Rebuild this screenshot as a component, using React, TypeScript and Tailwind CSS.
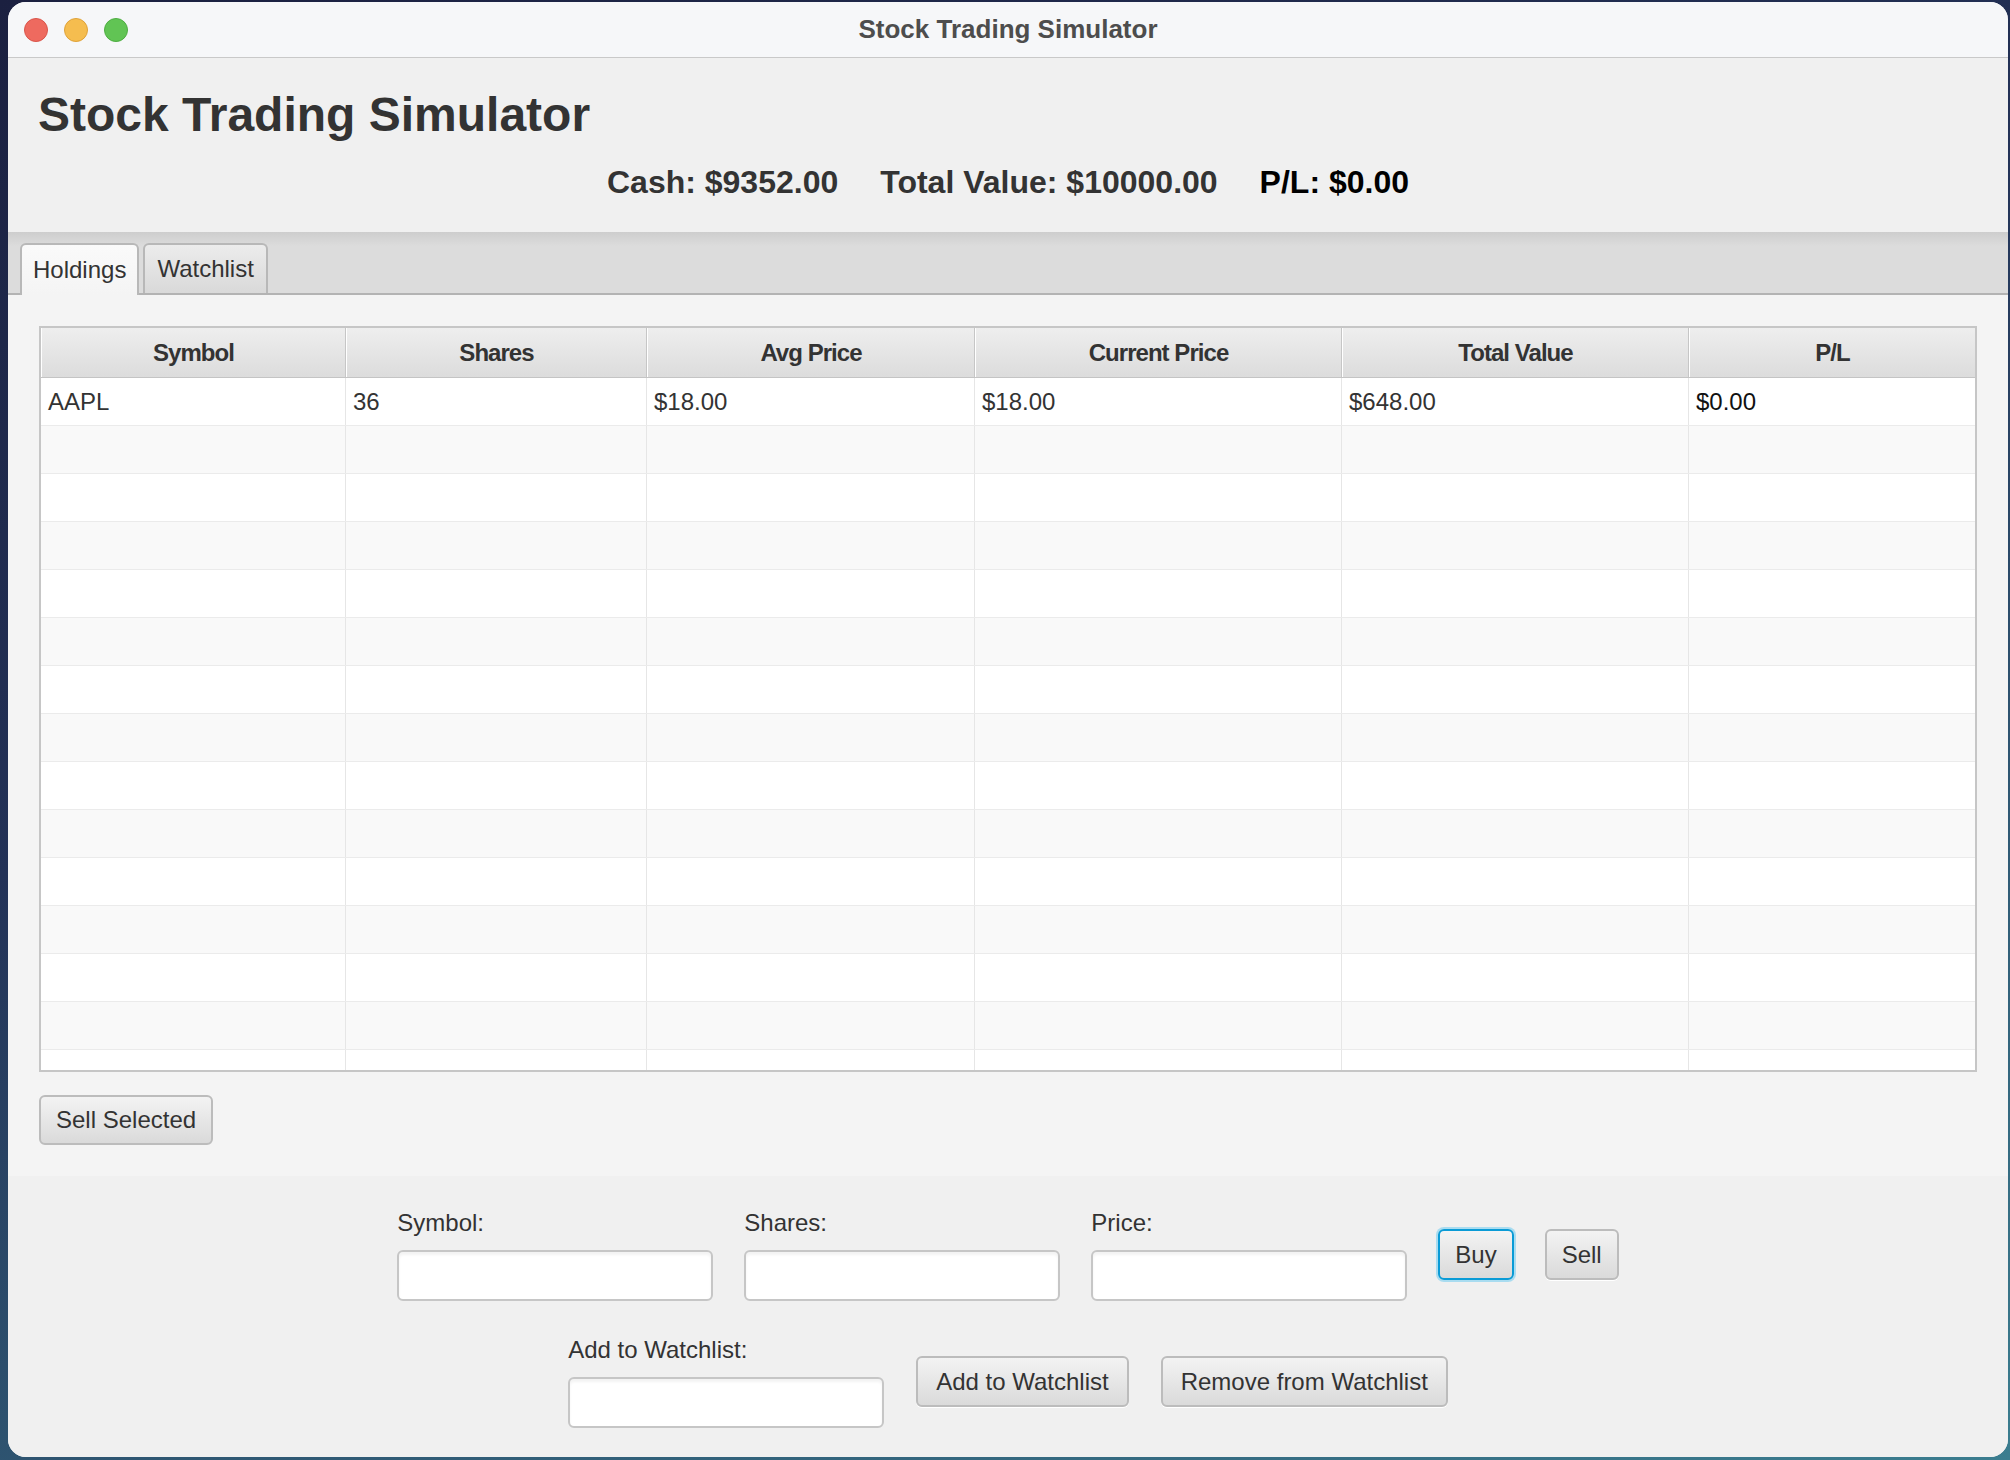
import React from "react";

const columns = [
  { name: "Symbol", width: 305 },
  { name: "Shares", width: 301 },
  { name: "Avg Price", width: 328 },
  { name: "Current Price", width: 367 },
  { name: "Total Value", width: 347 },
  { name: "P/L", width: 286 },
];

const gridCols = "grid grid-cols-[305px_301px_328px_367px_347px_286px]";

const rows: string[][] = [["AAPL", "36", "$18.00", "$18.00", "$648.00", "$0.00"]];

function Field({ label }: { label: string }) {
  return (
    <div className="flex w-[316px] flex-col gap-[12px]">
      <span className="text-[24px] leading-[30px] text-[#333]">{label}</span>
      <input
        className="h-[51px] w-full rounded-[6px] border-2 border-[#c6c6c6] bg-white shadow-[inset_0_3px_3px_rgba(0,0,0,0.05)] outline-none"
        type="text"
      />
    </div>
  );
}

function Button({
  children,
  focused = false,
  wide = false,
}: {
  children: React.ReactNode;
  focused?: boolean;
  wide?: boolean;
}) {
  return (
    <button
      className={`h-[51px] rounded-[6px] text-[24px] text-[#333] bg-[linear-gradient(to_bottom,#f3f3f3,#dadada)] shadow-[0_1px_0_#ffffff] ${
        wide ? "px-[18px]" : "px-[15px]"
      } ${focused ? "border-2 border-[#0a9bd6] ring-2 ring-[#a9dcf0]" : "border-2 border-[#bcbcbc]"}`}
    >
      {children}
    </button>
  );
}

export default function App() {
  const bodyRows = Array.from({ length: 15 }, (_, i) => rows[i] ?? ["", "", "", "", "", ""]);

  return (
    <div className="w-[2010px] h-[1460px] bg-[linear-gradient(160deg,#1b2040_0%,#233257_40%,#3b7d8f_100%)] pl-[8px] pt-[2px] font-['Liberation_Sans',Arial,sans-serif]">
      <div className="flex h-[1455px] w-[2000px] flex-col overflow-hidden rounded-[18px] bg-[#f0f0f0]">
        {/* Title bar */}
        <div className="grid h-[56px] shrink-0 grid-cols-[1fr_auto_1fr] items-center border-b border-[#c9c9c9] bg-[#f6f7f9]">
          <div className="flex items-center gap-[16px] pl-[16px]">
            <span className="h-[24px] w-[24px] rounded-full bg-[#ee6a5f] border border-[#d9554b]" />
            <span className="h-[24px] w-[24px] rounded-full bg-[#f5bd4f] border border-[#dea23a]" />
            <span className="h-[24px] w-[24px] rounded-full bg-[#61c454] border border-[#4ead42]" />
          </div>
          <span className="text-[26px] font-bold text-[#4d4d4d]">Stock Trading Simulator</span>
          <div />
        </div>

        {/* Header */}
        <div className="flex h-[174px] shrink-0 flex-col bg-[#f0f0f0] pl-[30px] pt-[33px]">
          <h1 className="text-[48px] font-bold leading-none text-[#333]">Stock Trading Simulator</h1>
          <div className="mt-[27px] flex justify-center gap-[42px] pr-[30px] text-[32px] font-bold leading-none">
            <span className="text-[#333]">Cash: $9352.00</span>
            <span className="text-[#333]">Total Value: $10000.00</span>
            <span className="text-black">P/L: $0.00</span>
          </div>
        </div>

        {/* Tabs */}
        <div className="flex h-[63px] shrink-0 items-end gap-[4px] border-b-2 border-[#b3b3b3] bg-[linear-gradient(to_bottom,#cdcdcd,#dcdcdc_14px)] pl-[12px]">
          <div className="-mb-[2px] flex h-[52px] items-center rounded-t-[6px] border-2 border-b-0 border-[#b8b8b8] bg-[linear-gradient(to_bottom,#fafafa,#f4f4f4)] px-[11px] text-[24px] text-[#333]">
            Holdings
          </div>
          <div className="flex h-[50px] items-center rounded-t-[6px] border-2 border-b-0 border-[#b8b8b8] bg-[linear-gradient(to_bottom,#ececec,#d9d9d9)] px-[12px] text-[24px] text-[#333]">
            Watchlist
          </div>
        </div>

        {/* Holdings content */}
        <div className="flex shrink-0 flex-col bg-[#f4f4f4] px-[31px] pb-[31px] pt-[31px]">
          <div className="flex h-[746px] flex-col overflow-hidden border-2 border-[#c6c6c6] bg-white">
            <div className={`${gridCols} h-[50px] shrink-0 border-b border-[#c4c4c4]`}>
              {columns.map((c, i) => (
                <div
                  key={c.name}
                  className={`flex items-center justify-center border-l border-white bg-[linear-gradient(to_bottom,#eeeeee,#dcdcdc)] text-[24px] font-bold tracking-[-0.04em] text-[#333] ${
                    i < columns.length - 1 ? "border-r border-r-[#c6c6c6]" : ""
                  }`}
                >
                  {c.name}
                </div>
              ))}
            </div>
            <div className="flex-1 overflow-hidden">
              {bodyRows.map((r, ri) => (
                <div
                  key={ri}
                  className={`${gridCols} h-[48px] border-b border-[#ebebeb] ${ri % 2 === 0 ? "bg-white" : "bg-[#f9f9f9]"}`}
                >
                  {r.map((cell, ci) => (
                    <div
                      key={ci}
                      className={`flex items-center pl-[7px] text-[24px] ${ci === 5 ? "text-[#111]" : "text-[#333]"} ${
                        ci < 5 ? "border-r border-[#e6e6e6]" : ""
                      }`}
                    >
                      {cell}
                    </div>
                  ))}
                </div>
              ))}
            </div>
          </div>
          <div className="mt-[23px] self-start">
            <button className="h-[50px] rounded-[6px] border-2 border-[#bcbcbc] bg-[linear-gradient(to_bottom,#f3f3f3,#dadada)] px-[15px] text-[24px] text-[#333]">
              Sell Selected
            </button>
          </div>
        </div>

        {/* Trade form */}
        <div className="flex flex-1 flex-col items-center gap-[34px] bg-[#f0f0f0] pt-[32px]">
          <div className="flex items-center gap-[31px]">
            <Field label="Symbol:" />
            <Field label="Shares:" />
            <Field label="Price:" />
            <Button focused>Buy</Button>
            <Button>Sell</Button>
          </div>
          <div className="flex items-center gap-[32px]">
            <Field label="Add to Watchlist:" />
            <Button wide>Add to Watchlist</Button>
            <Button wide>Remove from Watchlist</Button>
          </div>
        </div>
      </div>
    </div>
  );
}
